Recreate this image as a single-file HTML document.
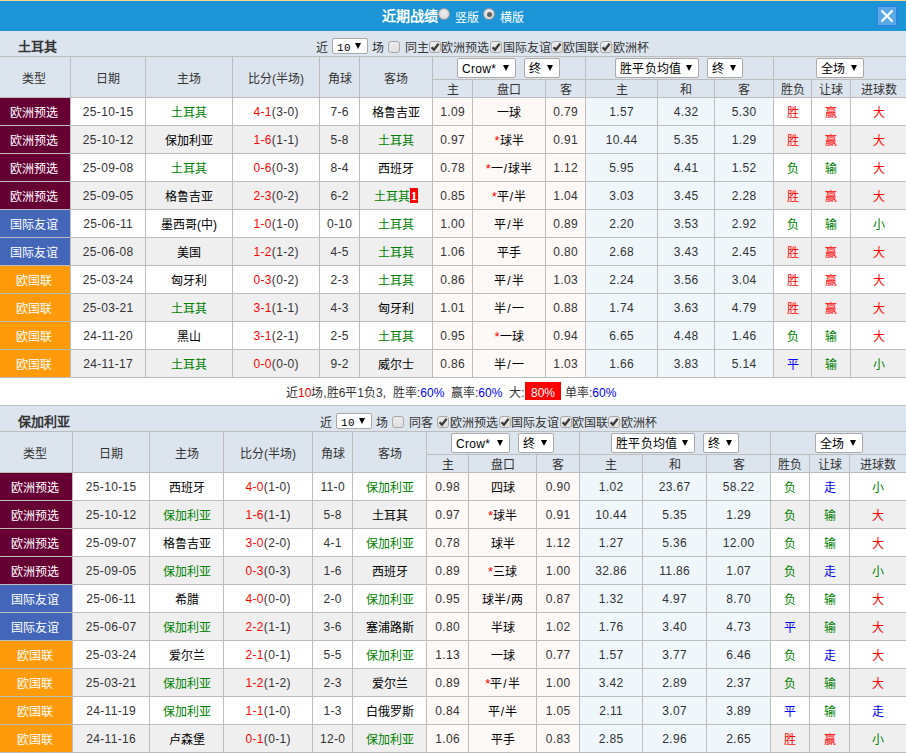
<!DOCTYPE html>
<html lang="zh-CN"><head><meta charset="utf-8"><title>近期战绩</title><style>
*{margin:0;padding:0;box-sizing:content-box}
html,body{width:906px;height:754px;overflow:hidden;background:#fff}
body{position:relative;font-family:"Liberation Sans",sans-serif;font-size:12px;color:#333}
div{position:absolute;white-space:nowrap}
.sel{background:#fff;border:1px solid #a9a9a9;border-radius:2px;color:#000;font-size:12px}
.sel .st{position:absolute;left:4px;top:1px;letter-spacing:0.3px}
.sel .ar{position:absolute;right:6px;top:50%;margin-top:-3px;width:0;height:0;border-left:3px solid transparent;border-right:3px solid transparent;border-top:6px solid #000}
.cb{width:10px;height:10px;border:1px solid #a8a8a8;border-radius:3px;background:linear-gradient(#ececec,#e0e0e0)}
.badge{display:inline-block;background:#f00;color:#fff;font-weight:bold;font-family:'Liberation Serif',serif;font-size:13px;line-height:15px;padding:0 1px;vertical-align:1px}
.radio{width:10px;height:10px;border:1px solid #9a9a9a;border-radius:50%;background:radial-gradient(circle at 50% 40%,#f0f0f0,#cfcfcf)}
</style></head>
<body>
<div style="left:0px;top:0px;width:906px;height:1px;background:#fbd492"></div>
<div style="left:0px;top:1px;width:906px;height:30px;background:#1b95d5"></div>
<div style="left:382px;top:1px;width:60px;height:30px;color:#fff;font-weight:bold;font-size:14px;line-height:30px">近期战绩</div>
<div class="radio" style="left:438px;top:8px"></div>
<div style="left:455px;top:2px;width:30px;height:30px;color:#fff;font-size:12px;line-height:32px">竖版</div>
<div class="radio" style="left:483px;top:8px"><div style="left:2.5px;top:2.5px;width:5px;height:5px;border-radius:50%;background:#606060"></div></div>
<div style="left:500px;top:2px;width:30px;height:30px;color:#fff;font-size:12px;line-height:32px">横版</div>
<div style="left:876px;top:5px;width:22px;height:22px;background:#2a87dd"></div>
<div style="left:878px;top:7px;width:18px;height:18px;background:#5aa8e8"></div>
<svg style="position:absolute;left:878px;top:7px" width="18" height="18" viewBox="0 0 18 18"><path d="M3.5 3.5L14.5 14.5M14.5 3.5L3.5 14.5" stroke="#fff" stroke-width="2.1" stroke-linecap="butt"/></svg>
<div style="left:0px;top:31px;width:906px;height:25px;background:#dce4ed"></div>
<div style="left:18px;top:34px;width:60px;height:25px;font-weight:bold;font-size:13px;line-height:25px;color:#333">土耳其</div>
<div style="left:316px;top:36px;width:14px;height:25px;line-height:25px;color:#333">近</div>
<div class="sel" style="left:332px;top:38px;width:34px;height:14px;line-height:14px;font-family:'Liberation Mono',monospace;font-size:11px"><span class="st" style="left:4px;top:2px">10</span><span class="ar" style="right:6px"></span></div>
<div style="left:372px;top:36px;width:14px;height:25px;line-height:25px;color:#333">场</div>
<div class="cb" style="left:388px;top:41px"></div>
<div style="left:405px;top:36px;width:30px;height:25px;line-height:25px;color:#333">同主</div>
<div class="cb" style="left:429px;top:41px"><svg style="position:absolute;left:0;top:0" width="10" height="10" viewBox="0 0 10 10"><path d="M1.6 5.2L4 7.8L8.6 1.8" fill="none" stroke="#3a3a3a" stroke-width="2.3"/></svg></div>
<div style="left:441px;top:36px;width:60px;height:25px;line-height:25px;color:#333">欧洲预选</div>
<div class="cb" style="left:490px;top:41px"><svg style="position:absolute;left:0;top:0" width="10" height="10" viewBox="0 0 10 10"><path d="M1.6 5.2L4 7.8L8.6 1.8" fill="none" stroke="#3a3a3a" stroke-width="2.3"/></svg></div>
<div style="left:503px;top:36px;width:60px;height:25px;line-height:25px;color:#333">国际友谊</div>
<div class="cb" style="left:551px;top:41px"><svg style="position:absolute;left:0;top:0" width="10" height="10" viewBox="0 0 10 10"><path d="M1.6 5.2L4 7.8L8.6 1.8" fill="none" stroke="#3a3a3a" stroke-width="2.3"/></svg></div>
<div style="left:563px;top:36px;width:60px;height:25px;line-height:25px;color:#333">欧国联</div>
<div class="cb" style="left:600px;top:41px"><svg style="position:absolute;left:0;top:0" width="10" height="10" viewBox="0 0 10 10"><path d="M1.6 5.2L4 7.8L8.6 1.8" fill="none" stroke="#3a3a3a" stroke-width="2.3"/></svg></div>
<div style="left:613px;top:36px;width:60px;height:25px;line-height:25px;color:#333">欧洲杯</div>
<div style="left:0px;top:57px;width:906px;height:40px;background:#dce4ed"></div>
<div style="left:0px;top:56px;width:906px;height:1px;background:#bdbdbd"></div>
<div style="left:0px;top:97px;width:906px;height:1px;background:#bdbdbd"></div>
<div style="left:432px;top:79px;width:474px;height:1px;background:#bdbdbd"></div>
<div style="left:70px;top:56px;width:1px;height:41px;background:#bdbdbd"></div>
<div style="left:145px;top:56px;width:1px;height:41px;background:#bdbdbd"></div>
<div style="left:232px;top:56px;width:1px;height:41px;background:#bdbdbd"></div>
<div style="left:319px;top:56px;width:1px;height:41px;background:#bdbdbd"></div>
<div style="left:359px;top:56px;width:1px;height:41px;background:#bdbdbd"></div>
<div style="left:432px;top:56px;width:1px;height:41px;background:#bdbdbd"></div>
<div style="left:472px;top:79px;width:1px;height:18px;background:#bdbdbd"></div>
<div style="left:545px;top:79px;width:1px;height:18px;background:#bdbdbd"></div>
<div style="left:585px;top:56px;width:1px;height:41px;background:#bdbdbd"></div>
<div style="left:657px;top:79px;width:1px;height:18px;background:#bdbdbd"></div>
<div style="left:714px;top:79px;width:1px;height:18px;background:#bdbdbd"></div>
<div style="left:773px;top:56px;width:1px;height:41px;background:#bdbdbd"></div>
<div style="left:811px;top:79px;width:1px;height:18px;background:#bdbdbd"></div>
<div style="left:850px;top:79px;width:1px;height:18px;background:#bdbdbd"></div>
<div style="left:-2px;top:59px;width:72px;height:40px;line-height:40px;text-align:center;color:#333">类型</div>
<div style="left:71px;top:59px;width:74px;height:40px;line-height:40px;text-align:center;color:#333">日期</div>
<div style="left:146px;top:59px;width:86px;height:40px;line-height:40px;text-align:center;color:#333">主场</div>
<div style="left:233px;top:59px;width:86px;height:40px;line-height:40px;text-align:center;color:#333">比分(半场)</div>
<div style="left:320px;top:59px;width:39px;height:40px;line-height:40px;text-align:center;color:#333">角球</div>
<div style="left:360px;top:59px;width:72px;height:40px;line-height:40px;text-align:center;color:#333">客场</div>
<div style="left:433px;top:82px;width:39px;height:17px;line-height:17px;text-align:center;color:#333">主</div>
<div style="left:473px;top:82px;width:72px;height:17px;line-height:17px;text-align:center;color:#333">盘口</div>
<div style="left:546px;top:82px;width:39px;height:17px;line-height:17px;text-align:center;color:#333">客</div>
<div style="left:586px;top:82px;width:71px;height:17px;line-height:17px;text-align:center;color:#333">主</div>
<div style="left:658px;top:82px;width:56px;height:17px;line-height:17px;text-align:center;color:#333">和</div>
<div style="left:715px;top:82px;width:58px;height:17px;line-height:17px;text-align:center;color:#333">客</div>
<div style="left:774px;top:82px;width:37px;height:17px;line-height:17px;text-align:center;color:#333">胜负</div>
<div style="left:812px;top:82px;width:38px;height:17px;line-height:17px;text-align:center;color:#333">让球</div>
<div style="left:851px;top:82px;width:55px;height:17px;line-height:17px;text-align:center;color:#333">进球数</div>
<div class="sel" style="left:457px;top:58px;width:57px;height:18px;line-height:18px;"><span class="st" style="">Crow*</span><span class="ar"></span></div>
<div class="sel" style="left:524px;top:58px;width:34px;height:18px;line-height:18px;"><span class="st" style="">终</span><span class="ar"></span></div>
<div class="sel" style="left:615px;top:58px;width:82px;height:18px;line-height:18px;"><span class="st" style="">胜平负均值</span><span class="ar"></span></div>
<div class="sel" style="left:707px;top:58px;width:34px;height:18px;line-height:18px;"><span class="st" style="">终</span><span class="ar"></span></div>
<div class="sel" style="left:816px;top:58px;width:46px;height:18px;line-height:18px;"><span class="st" style="">全场</span><span class="ar"></span></div>
<div style="left:0px;top:98px;width:906px;height:27px;background:#fff"></div>
<div style="left:433px;top:98px;width:152px;height:27px;background:#fdf9f6"></div>
<div style="left:586px;top:98px;width:187px;height:27px;background:#f0f7fb"></div>
<div style="left:0px;top:98px;width:70px;height:27px;background:#660033"></div>
<div style="left:-2px;top:100px;width:72px;height:27px;line-height:27px;text-align:center;color:#fff">欧洲预选</div>
<div style="left:71px;top:99px;width:74px;height:27px;line-height:27px;text-align:center;color:#333;letter-spacing:0.35px;text-indent:0.35px">25-10-15</div>
<div style="left:146px;top:100px;width:86px;height:27px;line-height:27px;text-align:center;"><span style="color:#008000">土耳其</span></div>
<div style="left:233px;top:99px;width:86px;height:27px;line-height:27px;text-align:center;color:#333;letter-spacing:0.35px;text-indent:0.35px"><span style="color:#ff0000">4-1</span>(3-0)</div>
<div style="left:320px;top:99px;width:39px;height:27px;line-height:27px;text-align:center;color:#333;letter-spacing:0.35px;text-indent:0.35px">7-6</div>
<div style="left:360px;top:100px;width:72px;height:27px;line-height:27px;text-align:center;"><span style="color:#000">格鲁吉亚</span></div>
<div style="left:433px;top:99px;width:39px;height:27px;line-height:27px;text-align:center;color:#333;letter-spacing:0.35px;text-indent:0.35px">1.09</div>
<div style="left:473px;top:100px;width:72px;height:27px;line-height:27px;text-align:center;color:#000">一球</div>
<div style="left:546px;top:99px;width:39px;height:27px;line-height:27px;text-align:center;color:#333;letter-spacing:0.35px;text-indent:0.35px">0.79</div>
<div style="left:586px;top:99px;width:71px;height:27px;line-height:27px;text-align:center;color:#333;letter-spacing:0.35px;text-indent:0.35px">1.57</div>
<div style="left:658px;top:99px;width:56px;height:27px;line-height:27px;text-align:center;color:#333;letter-spacing:0.35px;text-indent:0.35px">4.32</div>
<div style="left:715px;top:99px;width:58px;height:27px;line-height:27px;text-align:center;color:#333;letter-spacing:0.35px;text-indent:0.35px">5.30</div>
<div style="left:774px;top:100px;width:37px;height:27px;line-height:27px;text-align:center;color:#ff0000">胜</div>
<div style="left:812px;top:100px;width:38px;height:27px;line-height:27px;text-align:center;color:#ff0000">赢</div>
<div style="left:851px;top:100px;width:55px;height:27px;line-height:27px;text-align:center;color:#ff0000">大</div>
<div style="left:0px;top:125px;width:906px;height:1px;background:#bdbdbd"></div>
<div style="left:0px;top:126px;width:906px;height:27px;background:#efefef"></div>
<div style="left:433px;top:126px;width:152px;height:27px;background:#fdf9f6"></div>
<div style="left:586px;top:126px;width:187px;height:27px;background:#f0f7fb"></div>
<div style="left:0px;top:126px;width:70px;height:27px;background:#660033"></div>
<div style="left:-2px;top:128px;width:72px;height:27px;line-height:27px;text-align:center;color:#fff">欧洲预选</div>
<div style="left:71px;top:127px;width:74px;height:27px;line-height:27px;text-align:center;color:#333;letter-spacing:0.35px;text-indent:0.35px">25-10-12</div>
<div style="left:146px;top:128px;width:86px;height:27px;line-height:27px;text-align:center;"><span style="color:#000">保加利亚</span></div>
<div style="left:233px;top:127px;width:86px;height:27px;line-height:27px;text-align:center;color:#333;letter-spacing:0.35px;text-indent:0.35px"><span style="color:#ff0000">1-6</span>(1-1)</div>
<div style="left:320px;top:127px;width:39px;height:27px;line-height:27px;text-align:center;color:#333;letter-spacing:0.35px;text-indent:0.35px">5-8</div>
<div style="left:360px;top:128px;width:72px;height:27px;line-height:27px;text-align:center;"><span style="color:#008000">土耳其</span></div>
<div style="left:433px;top:127px;width:39px;height:27px;line-height:27px;text-align:center;color:#333;letter-spacing:0.35px;text-indent:0.35px">0.97</div>
<div style="left:473px;top:128px;width:72px;height:27px;line-height:27px;text-align:center;color:#000"><span style="color:#ff0000;font-size:13px;line-height:10px">*</span>球半</div>
<div style="left:546px;top:127px;width:39px;height:27px;line-height:27px;text-align:center;color:#333;letter-spacing:0.35px;text-indent:0.35px">0.91</div>
<div style="left:586px;top:127px;width:71px;height:27px;line-height:27px;text-align:center;color:#333;letter-spacing:0.35px;text-indent:0.35px">10.44</div>
<div style="left:658px;top:127px;width:56px;height:27px;line-height:27px;text-align:center;color:#333;letter-spacing:0.35px;text-indent:0.35px">5.35</div>
<div style="left:715px;top:127px;width:58px;height:27px;line-height:27px;text-align:center;color:#333;letter-spacing:0.35px;text-indent:0.35px">1.29</div>
<div style="left:774px;top:128px;width:37px;height:27px;line-height:27px;text-align:center;color:#ff0000">胜</div>
<div style="left:812px;top:128px;width:38px;height:27px;line-height:27px;text-align:center;color:#ff0000">赢</div>
<div style="left:851px;top:128px;width:55px;height:27px;line-height:27px;text-align:center;color:#ff0000">大</div>
<div style="left:0px;top:153px;width:906px;height:1px;background:#bdbdbd"></div>
<div style="left:0px;top:154px;width:906px;height:27px;background:#fff"></div>
<div style="left:433px;top:154px;width:152px;height:27px;background:#fdf9f6"></div>
<div style="left:586px;top:154px;width:187px;height:27px;background:#f0f7fb"></div>
<div style="left:0px;top:154px;width:70px;height:27px;background:#660033"></div>
<div style="left:-2px;top:156px;width:72px;height:27px;line-height:27px;text-align:center;color:#fff">欧洲预选</div>
<div style="left:71px;top:155px;width:74px;height:27px;line-height:27px;text-align:center;color:#333;letter-spacing:0.35px;text-indent:0.35px">25-09-08</div>
<div style="left:146px;top:156px;width:86px;height:27px;line-height:27px;text-align:center;"><span style="color:#008000">土耳其</span></div>
<div style="left:233px;top:155px;width:86px;height:27px;line-height:27px;text-align:center;color:#333;letter-spacing:0.35px;text-indent:0.35px"><span style="color:#ff0000">0-6</span>(0-3)</div>
<div style="left:320px;top:155px;width:39px;height:27px;line-height:27px;text-align:center;color:#333;letter-spacing:0.35px;text-indent:0.35px">8-4</div>
<div style="left:360px;top:156px;width:72px;height:27px;line-height:27px;text-align:center;"><span style="color:#000">西班牙</span></div>
<div style="left:433px;top:155px;width:39px;height:27px;line-height:27px;text-align:center;color:#333;letter-spacing:0.35px;text-indent:0.35px">0.78</div>
<div style="left:473px;top:156px;width:72px;height:27px;line-height:27px;text-align:center;color:#000"><span style="color:#ff0000;font-size:13px;line-height:10px">*</span>一<span style="margin:0 1px">/</span>球半</div>
<div style="left:546px;top:155px;width:39px;height:27px;line-height:27px;text-align:center;color:#333;letter-spacing:0.35px;text-indent:0.35px">1.12</div>
<div style="left:586px;top:155px;width:71px;height:27px;line-height:27px;text-align:center;color:#333;letter-spacing:0.35px;text-indent:0.35px">5.95</div>
<div style="left:658px;top:155px;width:56px;height:27px;line-height:27px;text-align:center;color:#333;letter-spacing:0.35px;text-indent:0.35px">4.41</div>
<div style="left:715px;top:155px;width:58px;height:27px;line-height:27px;text-align:center;color:#333;letter-spacing:0.35px;text-indent:0.35px">1.52</div>
<div style="left:774px;top:156px;width:37px;height:27px;line-height:27px;text-align:center;color:#008000">负</div>
<div style="left:812px;top:156px;width:38px;height:27px;line-height:27px;text-align:center;color:#008000">输</div>
<div style="left:851px;top:156px;width:55px;height:27px;line-height:27px;text-align:center;color:#ff0000">大</div>
<div style="left:0px;top:181px;width:906px;height:1px;background:#bdbdbd"></div>
<div style="left:0px;top:182px;width:906px;height:27px;background:#efefef"></div>
<div style="left:433px;top:182px;width:152px;height:27px;background:#fdf9f6"></div>
<div style="left:586px;top:182px;width:187px;height:27px;background:#f0f7fb"></div>
<div style="left:0px;top:182px;width:70px;height:27px;background:#660033"></div>
<div style="left:-2px;top:184px;width:72px;height:27px;line-height:27px;text-align:center;color:#fff">欧洲预选</div>
<div style="left:71px;top:183px;width:74px;height:27px;line-height:27px;text-align:center;color:#333;letter-spacing:0.35px;text-indent:0.35px">25-09-05</div>
<div style="left:146px;top:184px;width:86px;height:27px;line-height:27px;text-align:center;"><span style="color:#000">格鲁吉亚</span></div>
<div style="left:233px;top:183px;width:86px;height:27px;line-height:27px;text-align:center;color:#333;letter-spacing:0.35px;text-indent:0.35px"><span style="color:#ff0000">2-3</span>(0-2)</div>
<div style="left:320px;top:183px;width:39px;height:27px;line-height:27px;text-align:center;color:#333;letter-spacing:0.35px;text-indent:0.35px">6-2</div>
<div style="left:360px;top:184px;width:72px;height:27px;line-height:27px;text-align:center;"><span style="color:#008000">土耳其</span><span class="badge">1</span></div>
<div style="left:433px;top:183px;width:39px;height:27px;line-height:27px;text-align:center;color:#333;letter-spacing:0.35px;text-indent:0.35px">0.85</div>
<div style="left:473px;top:184px;width:72px;height:27px;line-height:27px;text-align:center;color:#000"><span style="color:#ff0000;font-size:13px;line-height:10px">*</span>平<span style="margin:0 1px">/</span>半</div>
<div style="left:546px;top:183px;width:39px;height:27px;line-height:27px;text-align:center;color:#333;letter-spacing:0.35px;text-indent:0.35px">1.04</div>
<div style="left:586px;top:183px;width:71px;height:27px;line-height:27px;text-align:center;color:#333;letter-spacing:0.35px;text-indent:0.35px">3.03</div>
<div style="left:658px;top:183px;width:56px;height:27px;line-height:27px;text-align:center;color:#333;letter-spacing:0.35px;text-indent:0.35px">3.45</div>
<div style="left:715px;top:183px;width:58px;height:27px;line-height:27px;text-align:center;color:#333;letter-spacing:0.35px;text-indent:0.35px">2.28</div>
<div style="left:774px;top:184px;width:37px;height:27px;line-height:27px;text-align:center;color:#ff0000">胜</div>
<div style="left:812px;top:184px;width:38px;height:27px;line-height:27px;text-align:center;color:#ff0000">赢</div>
<div style="left:851px;top:184px;width:55px;height:27px;line-height:27px;text-align:center;color:#ff0000">大</div>
<div style="left:0px;top:209px;width:906px;height:1px;background:#bdbdbd"></div>
<div style="left:0px;top:210px;width:906px;height:27px;background:#fff"></div>
<div style="left:433px;top:210px;width:152px;height:27px;background:#fdf9f6"></div>
<div style="left:586px;top:210px;width:187px;height:27px;background:#f0f7fb"></div>
<div style="left:0px;top:210px;width:70px;height:27px;background:#4466b8"></div>
<div style="left:-2px;top:212px;width:72px;height:27px;line-height:27px;text-align:center;color:#fff">国际友谊</div>
<div style="left:71px;top:211px;width:74px;height:27px;line-height:27px;text-align:center;color:#333;letter-spacing:0.35px;text-indent:0.35px">25-06-11</div>
<div style="left:146px;top:212px;width:86px;height:27px;line-height:27px;text-align:center;"><span style="color:#000">墨西哥(中)</span></div>
<div style="left:233px;top:211px;width:86px;height:27px;line-height:27px;text-align:center;color:#333;letter-spacing:0.35px;text-indent:0.35px"><span style="color:#ff0000">1-0</span>(1-0)</div>
<div style="left:320px;top:211px;width:39px;height:27px;line-height:27px;text-align:center;color:#333;letter-spacing:0.35px;text-indent:0.35px">0-10</div>
<div style="left:360px;top:212px;width:72px;height:27px;line-height:27px;text-align:center;"><span style="color:#008000">土耳其</span></div>
<div style="left:433px;top:211px;width:39px;height:27px;line-height:27px;text-align:center;color:#333;letter-spacing:0.35px;text-indent:0.35px">1.00</div>
<div style="left:473px;top:212px;width:72px;height:27px;line-height:27px;text-align:center;color:#000">平<span style="margin:0 1px">/</span>半</div>
<div style="left:546px;top:211px;width:39px;height:27px;line-height:27px;text-align:center;color:#333;letter-spacing:0.35px;text-indent:0.35px">0.89</div>
<div style="left:586px;top:211px;width:71px;height:27px;line-height:27px;text-align:center;color:#333;letter-spacing:0.35px;text-indent:0.35px">2.20</div>
<div style="left:658px;top:211px;width:56px;height:27px;line-height:27px;text-align:center;color:#333;letter-spacing:0.35px;text-indent:0.35px">3.53</div>
<div style="left:715px;top:211px;width:58px;height:27px;line-height:27px;text-align:center;color:#333;letter-spacing:0.35px;text-indent:0.35px">2.92</div>
<div style="left:774px;top:212px;width:37px;height:27px;line-height:27px;text-align:center;color:#008000">负</div>
<div style="left:812px;top:212px;width:38px;height:27px;line-height:27px;text-align:center;color:#008000">输</div>
<div style="left:851px;top:212px;width:55px;height:27px;line-height:27px;text-align:center;color:#008000">小</div>
<div style="left:0px;top:237px;width:906px;height:1px;background:#bdbdbd"></div>
<div style="left:0px;top:238px;width:906px;height:27px;background:#efefef"></div>
<div style="left:433px;top:238px;width:152px;height:27px;background:#fdf9f6"></div>
<div style="left:586px;top:238px;width:187px;height:27px;background:#f0f7fb"></div>
<div style="left:0px;top:238px;width:70px;height:27px;background:#4466b8"></div>
<div style="left:-2px;top:240px;width:72px;height:27px;line-height:27px;text-align:center;color:#fff">国际友谊</div>
<div style="left:71px;top:239px;width:74px;height:27px;line-height:27px;text-align:center;color:#333;letter-spacing:0.35px;text-indent:0.35px">25-06-08</div>
<div style="left:146px;top:240px;width:86px;height:27px;line-height:27px;text-align:center;"><span style="color:#000">美国</span></div>
<div style="left:233px;top:239px;width:86px;height:27px;line-height:27px;text-align:center;color:#333;letter-spacing:0.35px;text-indent:0.35px"><span style="color:#ff0000">1-2</span>(1-2)</div>
<div style="left:320px;top:239px;width:39px;height:27px;line-height:27px;text-align:center;color:#333;letter-spacing:0.35px;text-indent:0.35px">4-5</div>
<div style="left:360px;top:240px;width:72px;height:27px;line-height:27px;text-align:center;"><span style="color:#008000">土耳其</span></div>
<div style="left:433px;top:239px;width:39px;height:27px;line-height:27px;text-align:center;color:#333;letter-spacing:0.35px;text-indent:0.35px">1.06</div>
<div style="left:473px;top:240px;width:72px;height:27px;line-height:27px;text-align:center;color:#000">平手</div>
<div style="left:546px;top:239px;width:39px;height:27px;line-height:27px;text-align:center;color:#333;letter-spacing:0.35px;text-indent:0.35px">0.80</div>
<div style="left:586px;top:239px;width:71px;height:27px;line-height:27px;text-align:center;color:#333;letter-spacing:0.35px;text-indent:0.35px">2.68</div>
<div style="left:658px;top:239px;width:56px;height:27px;line-height:27px;text-align:center;color:#333;letter-spacing:0.35px;text-indent:0.35px">3.43</div>
<div style="left:715px;top:239px;width:58px;height:27px;line-height:27px;text-align:center;color:#333;letter-spacing:0.35px;text-indent:0.35px">2.45</div>
<div style="left:774px;top:240px;width:37px;height:27px;line-height:27px;text-align:center;color:#ff0000">胜</div>
<div style="left:812px;top:240px;width:38px;height:27px;line-height:27px;text-align:center;color:#ff0000">赢</div>
<div style="left:851px;top:240px;width:55px;height:27px;line-height:27px;text-align:center;color:#ff0000">大</div>
<div style="left:0px;top:265px;width:906px;height:1px;background:#bdbdbd"></div>
<div style="left:0px;top:266px;width:906px;height:27px;background:#fff"></div>
<div style="left:433px;top:266px;width:152px;height:27px;background:#fdf9f6"></div>
<div style="left:586px;top:266px;width:187px;height:27px;background:#f0f7fb"></div>
<div style="left:0px;top:266px;width:70px;height:27px;background:#ff9a0a"></div>
<div style="left:-2px;top:268px;width:72px;height:27px;line-height:27px;text-align:center;color:#fff">欧国联</div>
<div style="left:71px;top:267px;width:74px;height:27px;line-height:27px;text-align:center;color:#333;letter-spacing:0.35px;text-indent:0.35px">25-03-24</div>
<div style="left:146px;top:268px;width:86px;height:27px;line-height:27px;text-align:center;"><span style="color:#000">匈牙利</span></div>
<div style="left:233px;top:267px;width:86px;height:27px;line-height:27px;text-align:center;color:#333;letter-spacing:0.35px;text-indent:0.35px"><span style="color:#ff0000">0-3</span>(0-2)</div>
<div style="left:320px;top:267px;width:39px;height:27px;line-height:27px;text-align:center;color:#333;letter-spacing:0.35px;text-indent:0.35px">2-3</div>
<div style="left:360px;top:268px;width:72px;height:27px;line-height:27px;text-align:center;"><span style="color:#008000">土耳其</span></div>
<div style="left:433px;top:267px;width:39px;height:27px;line-height:27px;text-align:center;color:#333;letter-spacing:0.35px;text-indent:0.35px">0.86</div>
<div style="left:473px;top:268px;width:72px;height:27px;line-height:27px;text-align:center;color:#000">平<span style="margin:0 1px">/</span>半</div>
<div style="left:546px;top:267px;width:39px;height:27px;line-height:27px;text-align:center;color:#333;letter-spacing:0.35px;text-indent:0.35px">1.03</div>
<div style="left:586px;top:267px;width:71px;height:27px;line-height:27px;text-align:center;color:#333;letter-spacing:0.35px;text-indent:0.35px">2.24</div>
<div style="left:658px;top:267px;width:56px;height:27px;line-height:27px;text-align:center;color:#333;letter-spacing:0.35px;text-indent:0.35px">3.56</div>
<div style="left:715px;top:267px;width:58px;height:27px;line-height:27px;text-align:center;color:#333;letter-spacing:0.35px;text-indent:0.35px">3.04</div>
<div style="left:774px;top:268px;width:37px;height:27px;line-height:27px;text-align:center;color:#ff0000">胜</div>
<div style="left:812px;top:268px;width:38px;height:27px;line-height:27px;text-align:center;color:#ff0000">赢</div>
<div style="left:851px;top:268px;width:55px;height:27px;line-height:27px;text-align:center;color:#ff0000">大</div>
<div style="left:0px;top:293px;width:906px;height:1px;background:#bdbdbd"></div>
<div style="left:0px;top:294px;width:906px;height:27px;background:#efefef"></div>
<div style="left:433px;top:294px;width:152px;height:27px;background:#fdf9f6"></div>
<div style="left:586px;top:294px;width:187px;height:27px;background:#f0f7fb"></div>
<div style="left:0px;top:294px;width:70px;height:27px;background:#ff9a0a"></div>
<div style="left:-2px;top:296px;width:72px;height:27px;line-height:27px;text-align:center;color:#fff">欧国联</div>
<div style="left:71px;top:295px;width:74px;height:27px;line-height:27px;text-align:center;color:#333;letter-spacing:0.35px;text-indent:0.35px">25-03-21</div>
<div style="left:146px;top:296px;width:86px;height:27px;line-height:27px;text-align:center;"><span style="color:#008000">土耳其</span></div>
<div style="left:233px;top:295px;width:86px;height:27px;line-height:27px;text-align:center;color:#333;letter-spacing:0.35px;text-indent:0.35px"><span style="color:#ff0000">3-1</span>(1-1)</div>
<div style="left:320px;top:295px;width:39px;height:27px;line-height:27px;text-align:center;color:#333;letter-spacing:0.35px;text-indent:0.35px">4-3</div>
<div style="left:360px;top:296px;width:72px;height:27px;line-height:27px;text-align:center;"><span style="color:#000">匈牙利</span></div>
<div style="left:433px;top:295px;width:39px;height:27px;line-height:27px;text-align:center;color:#333;letter-spacing:0.35px;text-indent:0.35px">1.01</div>
<div style="left:473px;top:296px;width:72px;height:27px;line-height:27px;text-align:center;color:#000">半<span style="margin:0 1px">/</span>一</div>
<div style="left:546px;top:295px;width:39px;height:27px;line-height:27px;text-align:center;color:#333;letter-spacing:0.35px;text-indent:0.35px">0.88</div>
<div style="left:586px;top:295px;width:71px;height:27px;line-height:27px;text-align:center;color:#333;letter-spacing:0.35px;text-indent:0.35px">1.74</div>
<div style="left:658px;top:295px;width:56px;height:27px;line-height:27px;text-align:center;color:#333;letter-spacing:0.35px;text-indent:0.35px">3.63</div>
<div style="left:715px;top:295px;width:58px;height:27px;line-height:27px;text-align:center;color:#333;letter-spacing:0.35px;text-indent:0.35px">4.79</div>
<div style="left:774px;top:296px;width:37px;height:27px;line-height:27px;text-align:center;color:#ff0000">胜</div>
<div style="left:812px;top:296px;width:38px;height:27px;line-height:27px;text-align:center;color:#ff0000">赢</div>
<div style="left:851px;top:296px;width:55px;height:27px;line-height:27px;text-align:center;color:#ff0000">大</div>
<div style="left:0px;top:321px;width:906px;height:1px;background:#bdbdbd"></div>
<div style="left:0px;top:322px;width:906px;height:27px;background:#fff"></div>
<div style="left:433px;top:322px;width:152px;height:27px;background:#fdf9f6"></div>
<div style="left:586px;top:322px;width:187px;height:27px;background:#f0f7fb"></div>
<div style="left:0px;top:322px;width:70px;height:27px;background:#ff9a0a"></div>
<div style="left:-2px;top:324px;width:72px;height:27px;line-height:27px;text-align:center;color:#fff">欧国联</div>
<div style="left:71px;top:323px;width:74px;height:27px;line-height:27px;text-align:center;color:#333;letter-spacing:0.35px;text-indent:0.35px">24-11-20</div>
<div style="left:146px;top:324px;width:86px;height:27px;line-height:27px;text-align:center;"><span style="color:#000">黑山</span></div>
<div style="left:233px;top:323px;width:86px;height:27px;line-height:27px;text-align:center;color:#333;letter-spacing:0.35px;text-indent:0.35px"><span style="color:#ff0000">3-1</span>(2-1)</div>
<div style="left:320px;top:323px;width:39px;height:27px;line-height:27px;text-align:center;color:#333;letter-spacing:0.35px;text-indent:0.35px">2-5</div>
<div style="left:360px;top:324px;width:72px;height:27px;line-height:27px;text-align:center;"><span style="color:#008000">土耳其</span></div>
<div style="left:433px;top:323px;width:39px;height:27px;line-height:27px;text-align:center;color:#333;letter-spacing:0.35px;text-indent:0.35px">0.95</div>
<div style="left:473px;top:324px;width:72px;height:27px;line-height:27px;text-align:center;color:#000"><span style="color:#ff0000;font-size:13px;line-height:10px">*</span>一球</div>
<div style="left:546px;top:323px;width:39px;height:27px;line-height:27px;text-align:center;color:#333;letter-spacing:0.35px;text-indent:0.35px">0.94</div>
<div style="left:586px;top:323px;width:71px;height:27px;line-height:27px;text-align:center;color:#333;letter-spacing:0.35px;text-indent:0.35px">6.65</div>
<div style="left:658px;top:323px;width:56px;height:27px;line-height:27px;text-align:center;color:#333;letter-spacing:0.35px;text-indent:0.35px">4.48</div>
<div style="left:715px;top:323px;width:58px;height:27px;line-height:27px;text-align:center;color:#333;letter-spacing:0.35px;text-indent:0.35px">1.46</div>
<div style="left:774px;top:324px;width:37px;height:27px;line-height:27px;text-align:center;color:#008000">负</div>
<div style="left:812px;top:324px;width:38px;height:27px;line-height:27px;text-align:center;color:#008000">输</div>
<div style="left:851px;top:324px;width:55px;height:27px;line-height:27px;text-align:center;color:#ff0000">大</div>
<div style="left:0px;top:349px;width:906px;height:1px;background:#bdbdbd"></div>
<div style="left:0px;top:350px;width:906px;height:27px;background:#efefef"></div>
<div style="left:433px;top:350px;width:152px;height:27px;background:#fdf9f6"></div>
<div style="left:586px;top:350px;width:187px;height:27px;background:#f0f7fb"></div>
<div style="left:0px;top:350px;width:70px;height:27px;background:#ff9a0a"></div>
<div style="left:-2px;top:352px;width:72px;height:27px;line-height:27px;text-align:center;color:#fff">欧国联</div>
<div style="left:71px;top:351px;width:74px;height:27px;line-height:27px;text-align:center;color:#333;letter-spacing:0.35px;text-indent:0.35px">24-11-17</div>
<div style="left:146px;top:352px;width:86px;height:27px;line-height:27px;text-align:center;"><span style="color:#008000">土耳其</span></div>
<div style="left:233px;top:351px;width:86px;height:27px;line-height:27px;text-align:center;color:#333;letter-spacing:0.35px;text-indent:0.35px"><span style="color:#ff0000">0-0</span>(0-0)</div>
<div style="left:320px;top:351px;width:39px;height:27px;line-height:27px;text-align:center;color:#333;letter-spacing:0.35px;text-indent:0.35px">9-2</div>
<div style="left:360px;top:352px;width:72px;height:27px;line-height:27px;text-align:center;"><span style="color:#000">威尔士</span></div>
<div style="left:433px;top:351px;width:39px;height:27px;line-height:27px;text-align:center;color:#333;letter-spacing:0.35px;text-indent:0.35px">0.86</div>
<div style="left:473px;top:352px;width:72px;height:27px;line-height:27px;text-align:center;color:#000">半<span style="margin:0 1px">/</span>一</div>
<div style="left:546px;top:351px;width:39px;height:27px;line-height:27px;text-align:center;color:#333;letter-spacing:0.35px;text-indent:0.35px">1.03</div>
<div style="left:586px;top:351px;width:71px;height:27px;line-height:27px;text-align:center;color:#333;letter-spacing:0.35px;text-indent:0.35px">1.66</div>
<div style="left:658px;top:351px;width:56px;height:27px;line-height:27px;text-align:center;color:#333;letter-spacing:0.35px;text-indent:0.35px">3.83</div>
<div style="left:715px;top:351px;width:58px;height:27px;line-height:27px;text-align:center;color:#333;letter-spacing:0.35px;text-indent:0.35px">5.14</div>
<div style="left:774px;top:352px;width:37px;height:27px;line-height:27px;text-align:center;color:#0000ff">平</div>
<div style="left:812px;top:352px;width:38px;height:27px;line-height:27px;text-align:center;color:#008000">输</div>
<div style="left:851px;top:352px;width:55px;height:27px;line-height:27px;text-align:center;color:#008000">小</div>
<div style="left:0px;top:377px;width:906px;height:1px;background:#bdbdbd"></div>
<div style="left:70px;top:97px;width:1px;height:280px;background:#bdbdbd"></div>
<div style="left:145px;top:97px;width:1px;height:280px;background:#bdbdbd"></div>
<div style="left:232px;top:97px;width:1px;height:280px;background:#bdbdbd"></div>
<div style="left:319px;top:97px;width:1px;height:280px;background:#bdbdbd"></div>
<div style="left:359px;top:97px;width:1px;height:280px;background:#bdbdbd"></div>
<div style="left:432px;top:97px;width:1px;height:280px;background:#bdbdbd"></div>
<div style="left:472px;top:97px;width:1px;height:280px;background:#bdbdbd"></div>
<div style="left:545px;top:97px;width:1px;height:280px;background:#bdbdbd"></div>
<div style="left:585px;top:97px;width:1px;height:280px;background:#bdbdbd"></div>
<div style="left:657px;top:97px;width:1px;height:280px;background:#bdbdbd"></div>
<div style="left:714px;top:97px;width:1px;height:280px;background:#bdbdbd"></div>
<div style="left:773px;top:97px;width:1px;height:280px;background:#bdbdbd"></div>
<div style="left:811px;top:97px;width:1px;height:280px;background:#bdbdbd"></div>
<div style="left:850px;top:97px;width:1px;height:280px;background:#bdbdbd"></div>
<div style="left:0px;top:378px;width:906px;height:27px;background:#fff"></div>
<div style="left:286px;top:380px;height:27px;line-height:27px;color:#333">近<span style="color:red">10</span>场,胜6平1负3,</div>
<div style="left:393px;top:380px;height:27px;line-height:27px;color:#333">胜率:<span style="color:blue">60%</span></div>
<div style="left:451px;top:380px;height:27px;line-height:27px;color:#333">赢率:<span style="color:blue">60%</span></div>
<div style="left:509px;top:380px;height:27px;line-height:27px;color:#333">大:</div>
<div style="left:525px;top:382px;width:36px;height:18px;background:#f00"></div>
<div style="left:525px;top:380px;width:36px;height:27px;line-height:27px;color:#fff;text-align:center">80%</div>
<div style="left:565px;top:380px;height:27px;line-height:27px;color:#333">单率:<span style="color:blue">60%</span></div>
<div style="left:0px;top:405px;width:906px;height:1px;background:#bdbdbd"></div>
<div style="left:0px;top:406px;width:906px;height:25px;background:#dce4ed"></div>
<div style="left:18px;top:409px;width:60px;height:25px;font-weight:bold;font-size:13px;line-height:25px;color:#333">保加利亚</div>
<div style="left:320px;top:411px;width:14px;height:25px;line-height:25px;color:#333">近</div>
<div class="sel" style="left:336px;top:413px;width:34px;height:14px;line-height:14px;font-family:'Liberation Mono',monospace;font-size:11px"><span class="st" style="left:4px;top:2px">10</span><span class="ar" style="right:6px"></span></div>
<div style="left:376px;top:411px;width:14px;height:25px;line-height:25px;color:#333">场</div>
<div class="cb" style="left:392px;top:416px"></div>
<div style="left:409px;top:411px;width:30px;height:25px;line-height:25px;color:#333">同客</div>
<div class="cb" style="left:437px;top:416px"><svg style="position:absolute;left:0;top:0" width="10" height="10" viewBox="0 0 10 10"><path d="M1.6 5.2L4 7.8L8.6 1.8" fill="none" stroke="#3a3a3a" stroke-width="2.3"/></svg></div>
<div style="left:450px;top:411px;width:60px;height:25px;line-height:25px;color:#333">欧洲预选</div>
<div class="cb" style="left:499px;top:416px"><svg style="position:absolute;left:0;top:0" width="10" height="10" viewBox="0 0 10 10"><path d="M1.6 5.2L4 7.8L8.6 1.8" fill="none" stroke="#3a3a3a" stroke-width="2.3"/></svg></div>
<div style="left:511px;top:411px;width:60px;height:25px;line-height:25px;color:#333">国际友谊</div>
<div class="cb" style="left:560px;top:416px"><svg style="position:absolute;left:0;top:0" width="10" height="10" viewBox="0 0 10 10"><path d="M1.6 5.2L4 7.8L8.6 1.8" fill="none" stroke="#3a3a3a" stroke-width="2.3"/></svg></div>
<div style="left:572px;top:411px;width:60px;height:25px;line-height:25px;color:#333">欧国联</div>
<div class="cb" style="left:608px;top:416px"><svg style="position:absolute;left:0;top:0" width="10" height="10" viewBox="0 0 10 10"><path d="M1.6 5.2L4 7.8L8.6 1.8" fill="none" stroke="#3a3a3a" stroke-width="2.3"/></svg></div>
<div style="left:621px;top:411px;width:60px;height:25px;line-height:25px;color:#333">欧洲杯</div>
<div style="left:0px;top:432px;width:906px;height:40px;background:#dce4ed"></div>
<div style="left:0px;top:431px;width:906px;height:1px;background:#bdbdbd"></div>
<div style="left:0px;top:472px;width:906px;height:1px;background:#bdbdbd"></div>
<div style="left:426px;top:454px;width:480px;height:1px;background:#bdbdbd"></div>
<div style="left:72px;top:431px;width:1px;height:41px;background:#bdbdbd"></div>
<div style="left:149px;top:431px;width:1px;height:41px;background:#bdbdbd"></div>
<div style="left:223px;top:431px;width:1px;height:41px;background:#bdbdbd"></div>
<div style="left:312px;top:431px;width:1px;height:41px;background:#bdbdbd"></div>
<div style="left:352px;top:431px;width:1px;height:41px;background:#bdbdbd"></div>
<div style="left:426px;top:431px;width:1px;height:41px;background:#bdbdbd"></div>
<div style="left:468px;top:454px;width:1px;height:18px;background:#bdbdbd"></div>
<div style="left:536px;top:454px;width:1px;height:18px;background:#bdbdbd"></div>
<div style="left:579px;top:431px;width:1px;height:41px;background:#bdbdbd"></div>
<div style="left:642px;top:454px;width:1px;height:18px;background:#bdbdbd"></div>
<div style="left:706px;top:454px;width:1px;height:18px;background:#bdbdbd"></div>
<div style="left:770px;top:431px;width:1px;height:41px;background:#bdbdbd"></div>
<div style="left:809px;top:454px;width:1px;height:18px;background:#bdbdbd"></div>
<div style="left:849px;top:454px;width:1px;height:18px;background:#bdbdbd"></div>
<div style="left:-2px;top:434px;width:74px;height:40px;line-height:40px;text-align:center;color:#333">类型</div>
<div style="left:73px;top:434px;width:76px;height:40px;line-height:40px;text-align:center;color:#333">日期</div>
<div style="left:150px;top:434px;width:73px;height:40px;line-height:40px;text-align:center;color:#333">主场</div>
<div style="left:224px;top:434px;width:88px;height:40px;line-height:40px;text-align:center;color:#333">比分(半场)</div>
<div style="left:313px;top:434px;width:39px;height:40px;line-height:40px;text-align:center;color:#333">角球</div>
<div style="left:353px;top:434px;width:73px;height:40px;line-height:40px;text-align:center;color:#333">客场</div>
<div style="left:427px;top:457px;width:41px;height:17px;line-height:17px;text-align:center;color:#333">主</div>
<div style="left:469px;top:457px;width:67px;height:17px;line-height:17px;text-align:center;color:#333">盘口</div>
<div style="left:537px;top:457px;width:42px;height:17px;line-height:17px;text-align:center;color:#333">客</div>
<div style="left:580px;top:457px;width:62px;height:17px;line-height:17px;text-align:center;color:#333">主</div>
<div style="left:643px;top:457px;width:63px;height:17px;line-height:17px;text-align:center;color:#333">和</div>
<div style="left:707px;top:457px;width:63px;height:17px;line-height:17px;text-align:center;color:#333">客</div>
<div style="left:771px;top:457px;width:38px;height:17px;line-height:17px;text-align:center;color:#333">胜负</div>
<div style="left:810px;top:457px;width:39px;height:17px;line-height:17px;text-align:center;color:#333">让球</div>
<div style="left:850px;top:457px;width:56px;height:17px;line-height:17px;text-align:center;color:#333">进球数</div>
<div class="sel" style="left:451px;top:433px;width:57px;height:18px;line-height:18px;"><span class="st" style="">Crow*</span><span class="ar"></span></div>
<div class="sel" style="left:518px;top:433px;width:34px;height:18px;line-height:18px;"><span class="st" style="">终</span><span class="ar"></span></div>
<div class="sel" style="left:611px;top:433px;width:82px;height:18px;line-height:18px;"><span class="st" style="">胜平负均值</span><span class="ar"></span></div>
<div class="sel" style="left:703px;top:433px;width:34px;height:18px;line-height:18px;"><span class="st" style="">终</span><span class="ar"></span></div>
<div class="sel" style="left:815px;top:433px;width:46px;height:18px;line-height:18px;"><span class="st" style="">全场</span><span class="ar"></span></div>
<div style="left:0px;top:473px;width:906px;height:27px;background:#fff"></div>
<div style="left:427px;top:473px;width:152px;height:27px;background:#fdf9f6"></div>
<div style="left:580px;top:473px;width:190px;height:27px;background:#f0f7fb"></div>
<div style="left:0px;top:473px;width:72px;height:27px;background:#660033"></div>
<div style="left:-2px;top:475px;width:74px;height:27px;line-height:27px;text-align:center;color:#fff">欧洲预选</div>
<div style="left:73px;top:474px;width:76px;height:27px;line-height:27px;text-align:center;color:#333;letter-spacing:0.35px;text-indent:0.35px">25-10-15</div>
<div style="left:150px;top:475px;width:73px;height:27px;line-height:27px;text-align:center;"><span style="color:#000">西班牙</span></div>
<div style="left:224px;top:474px;width:88px;height:27px;line-height:27px;text-align:center;color:#333;letter-spacing:0.35px;text-indent:0.35px"><span style="color:#ff0000">4-0</span>(1-0)</div>
<div style="left:313px;top:474px;width:39px;height:27px;line-height:27px;text-align:center;color:#333;letter-spacing:0.35px;text-indent:0.35px">11-0</div>
<div style="left:353px;top:475px;width:73px;height:27px;line-height:27px;text-align:center;"><span style="color:#008000">保加利亚</span></div>
<div style="left:427px;top:474px;width:41px;height:27px;line-height:27px;text-align:center;color:#333;letter-spacing:0.35px;text-indent:0.35px">0.98</div>
<div style="left:469px;top:475px;width:67px;height:27px;line-height:27px;text-align:center;color:#000">四球</div>
<div style="left:537px;top:474px;width:42px;height:27px;line-height:27px;text-align:center;color:#333;letter-spacing:0.35px;text-indent:0.35px">0.90</div>
<div style="left:580px;top:474px;width:62px;height:27px;line-height:27px;text-align:center;color:#333;letter-spacing:0.35px;text-indent:0.35px">1.02</div>
<div style="left:643px;top:474px;width:63px;height:27px;line-height:27px;text-align:center;color:#333;letter-spacing:0.35px;text-indent:0.35px">23.67</div>
<div style="left:707px;top:474px;width:63px;height:27px;line-height:27px;text-align:center;color:#333;letter-spacing:0.35px;text-indent:0.35px">58.22</div>
<div style="left:771px;top:475px;width:38px;height:27px;line-height:27px;text-align:center;color:#008000">负</div>
<div style="left:810px;top:475px;width:39px;height:27px;line-height:27px;text-align:center;color:#0000ff">走</div>
<div style="left:850px;top:475px;width:56px;height:27px;line-height:27px;text-align:center;color:#008000">小</div>
<div style="left:0px;top:500px;width:906px;height:1px;background:#bdbdbd"></div>
<div style="left:0px;top:501px;width:906px;height:27px;background:#efefef"></div>
<div style="left:427px;top:501px;width:152px;height:27px;background:#fdf9f6"></div>
<div style="left:580px;top:501px;width:190px;height:27px;background:#f0f7fb"></div>
<div style="left:0px;top:501px;width:72px;height:27px;background:#660033"></div>
<div style="left:-2px;top:503px;width:74px;height:27px;line-height:27px;text-align:center;color:#fff">欧洲预选</div>
<div style="left:73px;top:502px;width:76px;height:27px;line-height:27px;text-align:center;color:#333;letter-spacing:0.35px;text-indent:0.35px">25-10-12</div>
<div style="left:150px;top:503px;width:73px;height:27px;line-height:27px;text-align:center;"><span style="color:#008000">保加利亚</span></div>
<div style="left:224px;top:502px;width:88px;height:27px;line-height:27px;text-align:center;color:#333;letter-spacing:0.35px;text-indent:0.35px"><span style="color:#ff0000">1-6</span>(1-1)</div>
<div style="left:313px;top:502px;width:39px;height:27px;line-height:27px;text-align:center;color:#333;letter-spacing:0.35px;text-indent:0.35px">5-8</div>
<div style="left:353px;top:503px;width:73px;height:27px;line-height:27px;text-align:center;"><span style="color:#000">土耳其</span></div>
<div style="left:427px;top:502px;width:41px;height:27px;line-height:27px;text-align:center;color:#333;letter-spacing:0.35px;text-indent:0.35px">0.97</div>
<div style="left:469px;top:503px;width:67px;height:27px;line-height:27px;text-align:center;color:#000"><span style="color:#ff0000;font-size:13px;line-height:10px">*</span>球半</div>
<div style="left:537px;top:502px;width:42px;height:27px;line-height:27px;text-align:center;color:#333;letter-spacing:0.35px;text-indent:0.35px">0.91</div>
<div style="left:580px;top:502px;width:62px;height:27px;line-height:27px;text-align:center;color:#333;letter-spacing:0.35px;text-indent:0.35px">10.44</div>
<div style="left:643px;top:502px;width:63px;height:27px;line-height:27px;text-align:center;color:#333;letter-spacing:0.35px;text-indent:0.35px">5.35</div>
<div style="left:707px;top:502px;width:63px;height:27px;line-height:27px;text-align:center;color:#333;letter-spacing:0.35px;text-indent:0.35px">1.29</div>
<div style="left:771px;top:503px;width:38px;height:27px;line-height:27px;text-align:center;color:#008000">负</div>
<div style="left:810px;top:503px;width:39px;height:27px;line-height:27px;text-align:center;color:#008000">输</div>
<div style="left:850px;top:503px;width:56px;height:27px;line-height:27px;text-align:center;color:#ff0000">大</div>
<div style="left:0px;top:528px;width:906px;height:1px;background:#bdbdbd"></div>
<div style="left:0px;top:529px;width:906px;height:27px;background:#fff"></div>
<div style="left:427px;top:529px;width:152px;height:27px;background:#fdf9f6"></div>
<div style="left:580px;top:529px;width:190px;height:27px;background:#f0f7fb"></div>
<div style="left:0px;top:529px;width:72px;height:27px;background:#660033"></div>
<div style="left:-2px;top:531px;width:74px;height:27px;line-height:27px;text-align:center;color:#fff">欧洲预选</div>
<div style="left:73px;top:530px;width:76px;height:27px;line-height:27px;text-align:center;color:#333;letter-spacing:0.35px;text-indent:0.35px">25-09-07</div>
<div style="left:150px;top:531px;width:73px;height:27px;line-height:27px;text-align:center;"><span style="color:#000">格鲁吉亚</span></div>
<div style="left:224px;top:530px;width:88px;height:27px;line-height:27px;text-align:center;color:#333;letter-spacing:0.35px;text-indent:0.35px"><span style="color:#ff0000">3-0</span>(2-0)</div>
<div style="left:313px;top:530px;width:39px;height:27px;line-height:27px;text-align:center;color:#333;letter-spacing:0.35px;text-indent:0.35px">4-1</div>
<div style="left:353px;top:531px;width:73px;height:27px;line-height:27px;text-align:center;"><span style="color:#008000">保加利亚</span></div>
<div style="left:427px;top:530px;width:41px;height:27px;line-height:27px;text-align:center;color:#333;letter-spacing:0.35px;text-indent:0.35px">0.78</div>
<div style="left:469px;top:531px;width:67px;height:27px;line-height:27px;text-align:center;color:#000">球半</div>
<div style="left:537px;top:530px;width:42px;height:27px;line-height:27px;text-align:center;color:#333;letter-spacing:0.35px;text-indent:0.35px">1.12</div>
<div style="left:580px;top:530px;width:62px;height:27px;line-height:27px;text-align:center;color:#333;letter-spacing:0.35px;text-indent:0.35px">1.27</div>
<div style="left:643px;top:530px;width:63px;height:27px;line-height:27px;text-align:center;color:#333;letter-spacing:0.35px;text-indent:0.35px">5.36</div>
<div style="left:707px;top:530px;width:63px;height:27px;line-height:27px;text-align:center;color:#333;letter-spacing:0.35px;text-indent:0.35px">12.00</div>
<div style="left:771px;top:531px;width:38px;height:27px;line-height:27px;text-align:center;color:#008000">负</div>
<div style="left:810px;top:531px;width:39px;height:27px;line-height:27px;text-align:center;color:#008000">输</div>
<div style="left:850px;top:531px;width:56px;height:27px;line-height:27px;text-align:center;color:#ff0000">大</div>
<div style="left:0px;top:556px;width:906px;height:1px;background:#bdbdbd"></div>
<div style="left:0px;top:557px;width:906px;height:27px;background:#efefef"></div>
<div style="left:427px;top:557px;width:152px;height:27px;background:#fdf9f6"></div>
<div style="left:580px;top:557px;width:190px;height:27px;background:#f0f7fb"></div>
<div style="left:0px;top:557px;width:72px;height:27px;background:#660033"></div>
<div style="left:-2px;top:559px;width:74px;height:27px;line-height:27px;text-align:center;color:#fff">欧洲预选</div>
<div style="left:73px;top:558px;width:76px;height:27px;line-height:27px;text-align:center;color:#333;letter-spacing:0.35px;text-indent:0.35px">25-09-05</div>
<div style="left:150px;top:559px;width:73px;height:27px;line-height:27px;text-align:center;"><span style="color:#008000">保加利亚</span></div>
<div style="left:224px;top:558px;width:88px;height:27px;line-height:27px;text-align:center;color:#333;letter-spacing:0.35px;text-indent:0.35px"><span style="color:#ff0000">0-3</span>(0-3)</div>
<div style="left:313px;top:558px;width:39px;height:27px;line-height:27px;text-align:center;color:#333;letter-spacing:0.35px;text-indent:0.35px">1-6</div>
<div style="left:353px;top:559px;width:73px;height:27px;line-height:27px;text-align:center;"><span style="color:#000">西班牙</span></div>
<div style="left:427px;top:558px;width:41px;height:27px;line-height:27px;text-align:center;color:#333;letter-spacing:0.35px;text-indent:0.35px">0.89</div>
<div style="left:469px;top:559px;width:67px;height:27px;line-height:27px;text-align:center;color:#000"><span style="color:#ff0000;font-size:13px;line-height:10px">*</span>三球</div>
<div style="left:537px;top:558px;width:42px;height:27px;line-height:27px;text-align:center;color:#333;letter-spacing:0.35px;text-indent:0.35px">1.00</div>
<div style="left:580px;top:558px;width:62px;height:27px;line-height:27px;text-align:center;color:#333;letter-spacing:0.35px;text-indent:0.35px">32.86</div>
<div style="left:643px;top:558px;width:63px;height:27px;line-height:27px;text-align:center;color:#333;letter-spacing:0.35px;text-indent:0.35px">11.86</div>
<div style="left:707px;top:558px;width:63px;height:27px;line-height:27px;text-align:center;color:#333;letter-spacing:0.35px;text-indent:0.35px">1.07</div>
<div style="left:771px;top:559px;width:38px;height:27px;line-height:27px;text-align:center;color:#008000">负</div>
<div style="left:810px;top:559px;width:39px;height:27px;line-height:27px;text-align:center;color:#0000ff">走</div>
<div style="left:850px;top:559px;width:56px;height:27px;line-height:27px;text-align:center;color:#008000">小</div>
<div style="left:0px;top:584px;width:906px;height:1px;background:#bdbdbd"></div>
<div style="left:0px;top:585px;width:906px;height:27px;background:#fff"></div>
<div style="left:427px;top:585px;width:152px;height:27px;background:#fdf9f6"></div>
<div style="left:580px;top:585px;width:190px;height:27px;background:#f0f7fb"></div>
<div style="left:0px;top:585px;width:72px;height:27px;background:#4466b8"></div>
<div style="left:-2px;top:587px;width:74px;height:27px;line-height:27px;text-align:center;color:#fff">国际友谊</div>
<div style="left:73px;top:586px;width:76px;height:27px;line-height:27px;text-align:center;color:#333;letter-spacing:0.35px;text-indent:0.35px">25-06-11</div>
<div style="left:150px;top:587px;width:73px;height:27px;line-height:27px;text-align:center;"><span style="color:#000">希腊</span></div>
<div style="left:224px;top:586px;width:88px;height:27px;line-height:27px;text-align:center;color:#333;letter-spacing:0.35px;text-indent:0.35px"><span style="color:#ff0000">4-0</span>(0-0)</div>
<div style="left:313px;top:586px;width:39px;height:27px;line-height:27px;text-align:center;color:#333;letter-spacing:0.35px;text-indent:0.35px">2-0</div>
<div style="left:353px;top:587px;width:73px;height:27px;line-height:27px;text-align:center;"><span style="color:#008000">保加利亚</span></div>
<div style="left:427px;top:586px;width:41px;height:27px;line-height:27px;text-align:center;color:#333;letter-spacing:0.35px;text-indent:0.35px">0.95</div>
<div style="left:469px;top:587px;width:67px;height:27px;line-height:27px;text-align:center;color:#000">球半<span style="margin:0 1px">/</span>两</div>
<div style="left:537px;top:586px;width:42px;height:27px;line-height:27px;text-align:center;color:#333;letter-spacing:0.35px;text-indent:0.35px">0.87</div>
<div style="left:580px;top:586px;width:62px;height:27px;line-height:27px;text-align:center;color:#333;letter-spacing:0.35px;text-indent:0.35px">1.32</div>
<div style="left:643px;top:586px;width:63px;height:27px;line-height:27px;text-align:center;color:#333;letter-spacing:0.35px;text-indent:0.35px">4.97</div>
<div style="left:707px;top:586px;width:63px;height:27px;line-height:27px;text-align:center;color:#333;letter-spacing:0.35px;text-indent:0.35px">8.70</div>
<div style="left:771px;top:587px;width:38px;height:27px;line-height:27px;text-align:center;color:#008000">负</div>
<div style="left:810px;top:587px;width:39px;height:27px;line-height:27px;text-align:center;color:#008000">输</div>
<div style="left:850px;top:587px;width:56px;height:27px;line-height:27px;text-align:center;color:#ff0000">大</div>
<div style="left:0px;top:612px;width:906px;height:1px;background:#bdbdbd"></div>
<div style="left:0px;top:613px;width:906px;height:27px;background:#efefef"></div>
<div style="left:427px;top:613px;width:152px;height:27px;background:#fdf9f6"></div>
<div style="left:580px;top:613px;width:190px;height:27px;background:#f0f7fb"></div>
<div style="left:0px;top:613px;width:72px;height:27px;background:#4466b8"></div>
<div style="left:-2px;top:615px;width:74px;height:27px;line-height:27px;text-align:center;color:#fff">国际友谊</div>
<div style="left:73px;top:614px;width:76px;height:27px;line-height:27px;text-align:center;color:#333;letter-spacing:0.35px;text-indent:0.35px">25-06-07</div>
<div style="left:150px;top:615px;width:73px;height:27px;line-height:27px;text-align:center;"><span style="color:#008000">保加利亚</span></div>
<div style="left:224px;top:614px;width:88px;height:27px;line-height:27px;text-align:center;color:#333;letter-spacing:0.35px;text-indent:0.35px"><span style="color:#ff0000">2-2</span>(1-1)</div>
<div style="left:313px;top:614px;width:39px;height:27px;line-height:27px;text-align:center;color:#333;letter-spacing:0.35px;text-indent:0.35px">3-6</div>
<div style="left:353px;top:615px;width:73px;height:27px;line-height:27px;text-align:center;"><span style="color:#000">塞浦路斯</span></div>
<div style="left:427px;top:614px;width:41px;height:27px;line-height:27px;text-align:center;color:#333;letter-spacing:0.35px;text-indent:0.35px">0.80</div>
<div style="left:469px;top:615px;width:67px;height:27px;line-height:27px;text-align:center;color:#000">半球</div>
<div style="left:537px;top:614px;width:42px;height:27px;line-height:27px;text-align:center;color:#333;letter-spacing:0.35px;text-indent:0.35px">1.02</div>
<div style="left:580px;top:614px;width:62px;height:27px;line-height:27px;text-align:center;color:#333;letter-spacing:0.35px;text-indent:0.35px">1.76</div>
<div style="left:643px;top:614px;width:63px;height:27px;line-height:27px;text-align:center;color:#333;letter-spacing:0.35px;text-indent:0.35px">3.40</div>
<div style="left:707px;top:614px;width:63px;height:27px;line-height:27px;text-align:center;color:#333;letter-spacing:0.35px;text-indent:0.35px">4.73</div>
<div style="left:771px;top:615px;width:38px;height:27px;line-height:27px;text-align:center;color:#0000ff">平</div>
<div style="left:810px;top:615px;width:39px;height:27px;line-height:27px;text-align:center;color:#008000">输</div>
<div style="left:850px;top:615px;width:56px;height:27px;line-height:27px;text-align:center;color:#ff0000">大</div>
<div style="left:0px;top:640px;width:906px;height:1px;background:#bdbdbd"></div>
<div style="left:0px;top:641px;width:906px;height:27px;background:#fff"></div>
<div style="left:427px;top:641px;width:152px;height:27px;background:#fdf9f6"></div>
<div style="left:580px;top:641px;width:190px;height:27px;background:#f0f7fb"></div>
<div style="left:0px;top:641px;width:72px;height:27px;background:#ff9a0a"></div>
<div style="left:-2px;top:643px;width:74px;height:27px;line-height:27px;text-align:center;color:#fff">欧国联</div>
<div style="left:73px;top:642px;width:76px;height:27px;line-height:27px;text-align:center;color:#333;letter-spacing:0.35px;text-indent:0.35px">25-03-24</div>
<div style="left:150px;top:643px;width:73px;height:27px;line-height:27px;text-align:center;"><span style="color:#000">爱尔兰</span></div>
<div style="left:224px;top:642px;width:88px;height:27px;line-height:27px;text-align:center;color:#333;letter-spacing:0.35px;text-indent:0.35px"><span style="color:#ff0000">2-1</span>(0-1)</div>
<div style="left:313px;top:642px;width:39px;height:27px;line-height:27px;text-align:center;color:#333;letter-spacing:0.35px;text-indent:0.35px">5-5</div>
<div style="left:353px;top:643px;width:73px;height:27px;line-height:27px;text-align:center;"><span style="color:#008000">保加利亚</span></div>
<div style="left:427px;top:642px;width:41px;height:27px;line-height:27px;text-align:center;color:#333;letter-spacing:0.35px;text-indent:0.35px">1.13</div>
<div style="left:469px;top:643px;width:67px;height:27px;line-height:27px;text-align:center;color:#000">一球</div>
<div style="left:537px;top:642px;width:42px;height:27px;line-height:27px;text-align:center;color:#333;letter-spacing:0.35px;text-indent:0.35px">0.77</div>
<div style="left:580px;top:642px;width:62px;height:27px;line-height:27px;text-align:center;color:#333;letter-spacing:0.35px;text-indent:0.35px">1.57</div>
<div style="left:643px;top:642px;width:63px;height:27px;line-height:27px;text-align:center;color:#333;letter-spacing:0.35px;text-indent:0.35px">3.77</div>
<div style="left:707px;top:642px;width:63px;height:27px;line-height:27px;text-align:center;color:#333;letter-spacing:0.35px;text-indent:0.35px">6.46</div>
<div style="left:771px;top:643px;width:38px;height:27px;line-height:27px;text-align:center;color:#008000">负</div>
<div style="left:810px;top:643px;width:39px;height:27px;line-height:27px;text-align:center;color:#0000ff">走</div>
<div style="left:850px;top:643px;width:56px;height:27px;line-height:27px;text-align:center;color:#ff0000">大</div>
<div style="left:0px;top:668px;width:906px;height:1px;background:#bdbdbd"></div>
<div style="left:0px;top:669px;width:906px;height:27px;background:#efefef"></div>
<div style="left:427px;top:669px;width:152px;height:27px;background:#fdf9f6"></div>
<div style="left:580px;top:669px;width:190px;height:27px;background:#f0f7fb"></div>
<div style="left:0px;top:669px;width:72px;height:27px;background:#ff9a0a"></div>
<div style="left:-2px;top:671px;width:74px;height:27px;line-height:27px;text-align:center;color:#fff">欧国联</div>
<div style="left:73px;top:670px;width:76px;height:27px;line-height:27px;text-align:center;color:#333;letter-spacing:0.35px;text-indent:0.35px">25-03-21</div>
<div style="left:150px;top:671px;width:73px;height:27px;line-height:27px;text-align:center;"><span style="color:#008000">保加利亚</span></div>
<div style="left:224px;top:670px;width:88px;height:27px;line-height:27px;text-align:center;color:#333;letter-spacing:0.35px;text-indent:0.35px"><span style="color:#ff0000">1-2</span>(1-2)</div>
<div style="left:313px;top:670px;width:39px;height:27px;line-height:27px;text-align:center;color:#333;letter-spacing:0.35px;text-indent:0.35px">2-3</div>
<div style="left:353px;top:671px;width:73px;height:27px;line-height:27px;text-align:center;"><span style="color:#000">爱尔兰</span></div>
<div style="left:427px;top:670px;width:41px;height:27px;line-height:27px;text-align:center;color:#333;letter-spacing:0.35px;text-indent:0.35px">0.89</div>
<div style="left:469px;top:671px;width:67px;height:27px;line-height:27px;text-align:center;color:#000"><span style="color:#ff0000;font-size:13px;line-height:10px">*</span>平<span style="margin:0 1px">/</span>半</div>
<div style="left:537px;top:670px;width:42px;height:27px;line-height:27px;text-align:center;color:#333;letter-spacing:0.35px;text-indent:0.35px">1.00</div>
<div style="left:580px;top:670px;width:62px;height:27px;line-height:27px;text-align:center;color:#333;letter-spacing:0.35px;text-indent:0.35px">3.42</div>
<div style="left:643px;top:670px;width:63px;height:27px;line-height:27px;text-align:center;color:#333;letter-spacing:0.35px;text-indent:0.35px">2.89</div>
<div style="left:707px;top:670px;width:63px;height:27px;line-height:27px;text-align:center;color:#333;letter-spacing:0.35px;text-indent:0.35px">2.37</div>
<div style="left:771px;top:671px;width:38px;height:27px;line-height:27px;text-align:center;color:#008000">负</div>
<div style="left:810px;top:671px;width:39px;height:27px;line-height:27px;text-align:center;color:#008000">输</div>
<div style="left:850px;top:671px;width:56px;height:27px;line-height:27px;text-align:center;color:#ff0000">大</div>
<div style="left:0px;top:696px;width:906px;height:1px;background:#bdbdbd"></div>
<div style="left:0px;top:697px;width:906px;height:27px;background:#fff"></div>
<div style="left:427px;top:697px;width:152px;height:27px;background:#fdf9f6"></div>
<div style="left:580px;top:697px;width:190px;height:27px;background:#f0f7fb"></div>
<div style="left:0px;top:697px;width:72px;height:27px;background:#ff9a0a"></div>
<div style="left:-2px;top:699px;width:74px;height:27px;line-height:27px;text-align:center;color:#fff">欧国联</div>
<div style="left:73px;top:698px;width:76px;height:27px;line-height:27px;text-align:center;color:#333;letter-spacing:0.35px;text-indent:0.35px">24-11-19</div>
<div style="left:150px;top:699px;width:73px;height:27px;line-height:27px;text-align:center;"><span style="color:#008000">保加利亚</span></div>
<div style="left:224px;top:698px;width:88px;height:27px;line-height:27px;text-align:center;color:#333;letter-spacing:0.35px;text-indent:0.35px"><span style="color:#ff0000">1-1</span>(1-0)</div>
<div style="left:313px;top:698px;width:39px;height:27px;line-height:27px;text-align:center;color:#333;letter-spacing:0.35px;text-indent:0.35px">1-3</div>
<div style="left:353px;top:699px;width:73px;height:27px;line-height:27px;text-align:center;"><span style="color:#000">白俄罗斯</span></div>
<div style="left:427px;top:698px;width:41px;height:27px;line-height:27px;text-align:center;color:#333;letter-spacing:0.35px;text-indent:0.35px">0.84</div>
<div style="left:469px;top:699px;width:67px;height:27px;line-height:27px;text-align:center;color:#000">平<span style="margin:0 1px">/</span>半</div>
<div style="left:537px;top:698px;width:42px;height:27px;line-height:27px;text-align:center;color:#333;letter-spacing:0.35px;text-indent:0.35px">1.05</div>
<div style="left:580px;top:698px;width:62px;height:27px;line-height:27px;text-align:center;color:#333;letter-spacing:0.35px;text-indent:0.35px">2.11</div>
<div style="left:643px;top:698px;width:63px;height:27px;line-height:27px;text-align:center;color:#333;letter-spacing:0.35px;text-indent:0.35px">3.07</div>
<div style="left:707px;top:698px;width:63px;height:27px;line-height:27px;text-align:center;color:#333;letter-spacing:0.35px;text-indent:0.35px">3.89</div>
<div style="left:771px;top:699px;width:38px;height:27px;line-height:27px;text-align:center;color:#0000ff">平</div>
<div style="left:810px;top:699px;width:39px;height:27px;line-height:27px;text-align:center;color:#008000">输</div>
<div style="left:850px;top:699px;width:56px;height:27px;line-height:27px;text-align:center;color:#0000ff">走</div>
<div style="left:0px;top:724px;width:906px;height:1px;background:#bdbdbd"></div>
<div style="left:0px;top:725px;width:906px;height:27px;background:#efefef"></div>
<div style="left:427px;top:725px;width:152px;height:27px;background:#fdf9f6"></div>
<div style="left:580px;top:725px;width:190px;height:27px;background:#f0f7fb"></div>
<div style="left:0px;top:725px;width:72px;height:27px;background:#ff9a0a"></div>
<div style="left:-2px;top:727px;width:74px;height:27px;line-height:27px;text-align:center;color:#fff">欧国联</div>
<div style="left:73px;top:726px;width:76px;height:27px;line-height:27px;text-align:center;color:#333;letter-spacing:0.35px;text-indent:0.35px">24-11-16</div>
<div style="left:150px;top:727px;width:73px;height:27px;line-height:27px;text-align:center;"><span style="color:#000">卢森堡</span></div>
<div style="left:224px;top:726px;width:88px;height:27px;line-height:27px;text-align:center;color:#333;letter-spacing:0.35px;text-indent:0.35px"><span style="color:#ff0000">0-1</span>(0-1)</div>
<div style="left:313px;top:726px;width:39px;height:27px;line-height:27px;text-align:center;color:#333;letter-spacing:0.35px;text-indent:0.35px">12-0</div>
<div style="left:353px;top:727px;width:73px;height:27px;line-height:27px;text-align:center;"><span style="color:#008000">保加利亚</span></div>
<div style="left:427px;top:726px;width:41px;height:27px;line-height:27px;text-align:center;color:#333;letter-spacing:0.35px;text-indent:0.35px">1.06</div>
<div style="left:469px;top:727px;width:67px;height:27px;line-height:27px;text-align:center;color:#000">平手</div>
<div style="left:537px;top:726px;width:42px;height:27px;line-height:27px;text-align:center;color:#333;letter-spacing:0.35px;text-indent:0.35px">0.83</div>
<div style="left:580px;top:726px;width:62px;height:27px;line-height:27px;text-align:center;color:#333;letter-spacing:0.35px;text-indent:0.35px">2.85</div>
<div style="left:643px;top:726px;width:63px;height:27px;line-height:27px;text-align:center;color:#333;letter-spacing:0.35px;text-indent:0.35px">2.96</div>
<div style="left:707px;top:726px;width:63px;height:27px;line-height:27px;text-align:center;color:#333;letter-spacing:0.35px;text-indent:0.35px">2.65</div>
<div style="left:771px;top:727px;width:38px;height:27px;line-height:27px;text-align:center;color:#ff0000">胜</div>
<div style="left:810px;top:727px;width:39px;height:27px;line-height:27px;text-align:center;color:#ff0000">赢</div>
<div style="left:850px;top:727px;width:56px;height:27px;line-height:27px;text-align:center;color:#008000">小</div>
<div style="left:0px;top:752px;width:906px;height:1px;background:#bdbdbd"></div>
<div style="left:72px;top:472px;width:1px;height:280px;background:#bdbdbd"></div>
<div style="left:149px;top:472px;width:1px;height:280px;background:#bdbdbd"></div>
<div style="left:223px;top:472px;width:1px;height:280px;background:#bdbdbd"></div>
<div style="left:312px;top:472px;width:1px;height:280px;background:#bdbdbd"></div>
<div style="left:352px;top:472px;width:1px;height:280px;background:#bdbdbd"></div>
<div style="left:426px;top:472px;width:1px;height:280px;background:#bdbdbd"></div>
<div style="left:468px;top:472px;width:1px;height:280px;background:#bdbdbd"></div>
<div style="left:536px;top:472px;width:1px;height:280px;background:#bdbdbd"></div>
<div style="left:579px;top:472px;width:1px;height:280px;background:#bdbdbd"></div>
<div style="left:642px;top:472px;width:1px;height:280px;background:#bdbdbd"></div>
<div style="left:706px;top:472px;width:1px;height:280px;background:#bdbdbd"></div>
<div style="left:770px;top:472px;width:1px;height:280px;background:#bdbdbd"></div>
<div style="left:809px;top:472px;width:1px;height:280px;background:#bdbdbd"></div>
<div style="left:849px;top:472px;width:1px;height:280px;background:#bdbdbd"></div>
</body></html>
